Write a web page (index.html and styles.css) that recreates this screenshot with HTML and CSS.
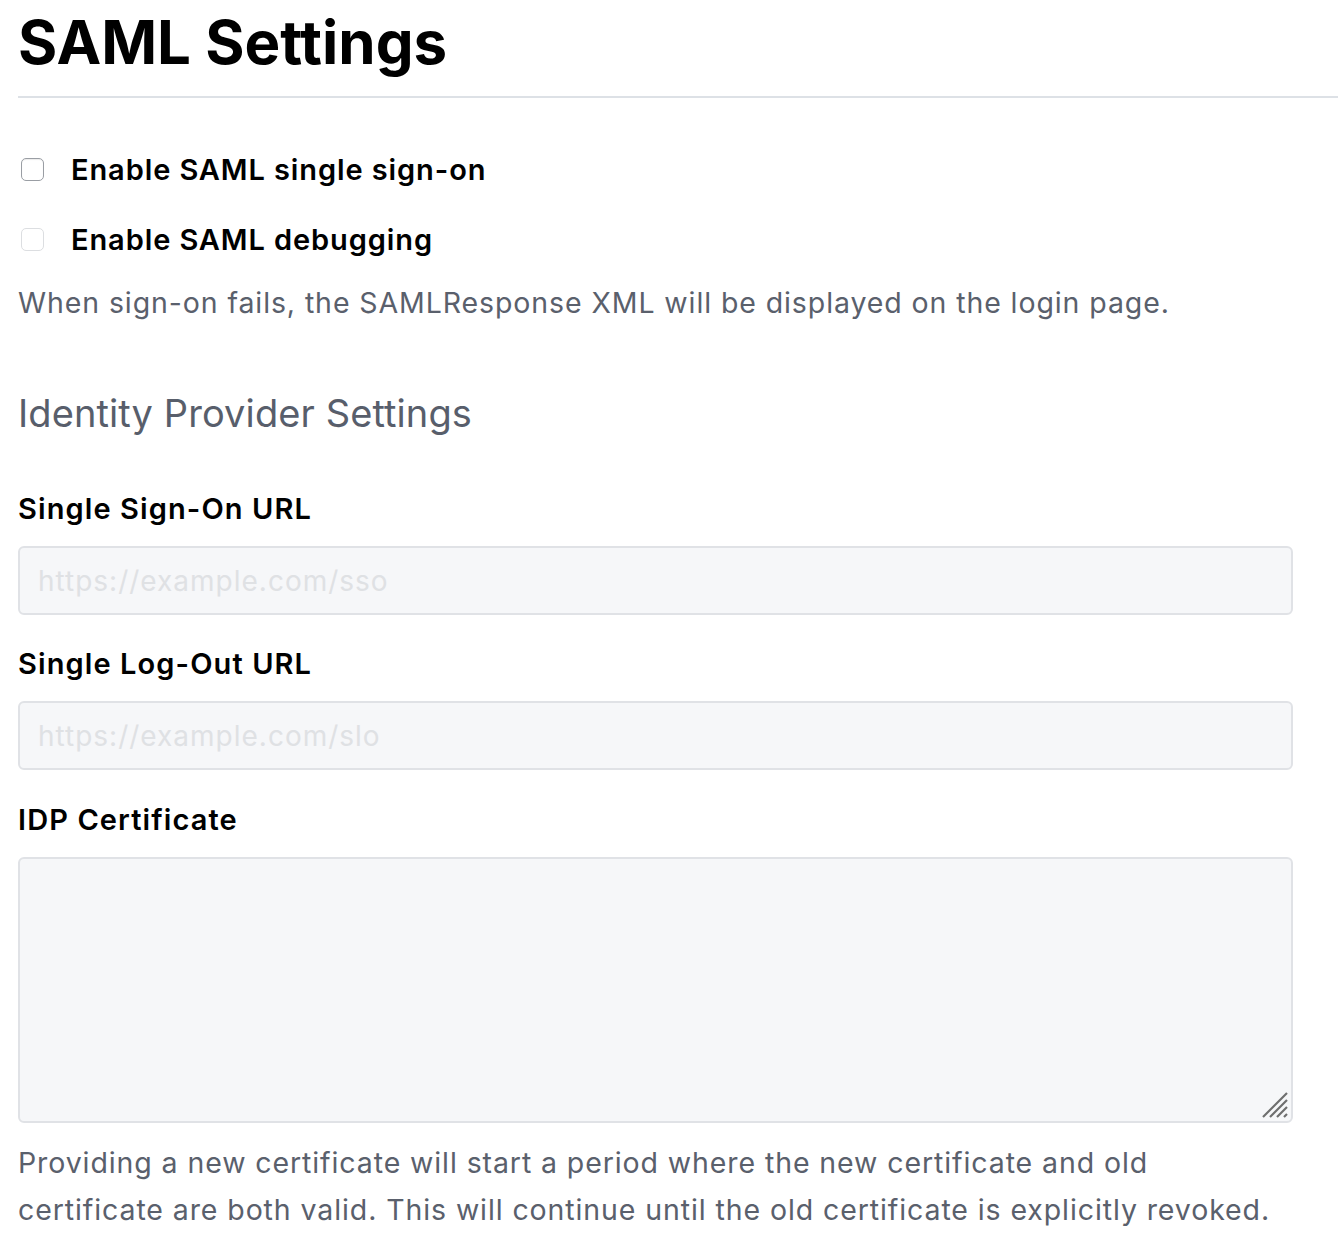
FILE: index.html
```html
<!DOCTYPE html>
<html>
<head>
<meta charset="utf-8">
<link rel="stylesheet" href="styles.css">
</head>
<body>
<div class="page">
  <h1 class="title">SAML Settings</h1>
  <hr class="divider">
  <label class="check">
    <span class="box"></span>
    <span class="check-text">Enable SAML single sign-on</span>
  </label>
  <label class="check">
    <span class="box box-disabled"></span>
    <span class="check-text">Enable SAML debugging</span>
  </label>
  <p class="help help-first">When sign-on fails, the SAMLResponse XML will be displayed on the login page.</p>
  <h2 class="section">Identity Provider Settings</h2>
  <div class="field">
    <div class="label">Single Sign-On URL</div>
    <input class="input" type="text" placeholder="https://example.com/sso">
  </div>
  <div class="field">
    <div class="label">Single Log-Out URL</div>
    <input class="input" type="text" placeholder="https://example.com/slo">
  </div>
  <div class="field">
    <div class="label">IDP Certificate</div>
    <div class="textarea-wrap">
      <textarea class="textarea"></textarea>
      <svg class="grip" width="28" height="28" viewBox="0 0 28 28">
        <path d="M2 26 L26 2 M9 26 L26 9 M16 26 L26 16 M23 26 L26 23" stroke="#6f6f6f" stroke-width="2.2" stroke-linecap="butt" fill="none"/>
      </svg>
    </div>
  </div>
  <p class="help help-last">Providing a new certificate will start a period where the new certificate and old certificate are both valid. This will continue until the old certificate is explicitly revoked.</p>
</div>
</body>
</html>
```
FILE: styles.css
```css
html, body {
  margin: 0;
  padding: 0;
  background: #ffffff;
}
body {
  font-family: Inter, "Noto Sans", "Liberation Sans", sans-serif;
  color: #000;
}
.page {
  padding: 0 0 0 18px;
}
.title {
  margin: 0;
  padding-top: 6px;
  font-size: 60px;
  font-weight: 700;
  line-height: 72px;
  letter-spacing: 0;
}
.divider {
  border: 0;
  height: 2px;
  background: #dde1e6;
  margin: 18px 0 0 0;
}
.check {
  display: flex;
  align-items: center;
  gap: 27px;
  height: 40px;
  margin-top: 0;
}
.check:first-of-type {
  margin-top: 51px;
}
.check + .check {
  margin-top: 30px;
}
.box {
  width: 21px;
  height: 21px;
  margin-left: 3px;
  border: 1.5px solid #9a9ea4;
  border-radius: 5px;
  background: #fff;
  box-shadow: inset 0 1px 1px rgba(0,0,0,0.08);
}
.box-disabled {
  border-color: #dcdee1;
  box-shadow: none;
}
.check-text {
  font-size: 29px;
  font-weight: 600;
  letter-spacing: 0.9px;
}
.help {
  margin: 0;
  font-size: 28.5px;
  line-height: 47px;
  color: #5a606c;
  letter-spacing: 0.9px;
  width: 1275px;
}
.help-first {
  margin-top: 20px;
}
.section {
  margin: 62px 0 0 0;
  font-size: 38px;
  font-weight: 400;
  line-height: 50px;
  color: #585e6b;
  letter-spacing: 0.1px;
}
.field {
  display: flex;
  flex-direction: column;
}
.field:first-of-type {
  margin-top: 51px;
}
.field + .field {
  margin-top: 29px;
}
.field + .field + .field {
  margin-top: 30px;
}
.label {
  font-size: 29px;
  font-weight: 600;
  line-height: 40px;
  margin-bottom: 17px;
  letter-spacing: 1.1px;
}
.input, .textarea {
  width: 1275px;
  box-sizing: border-box;
  border: 2px solid #e0e2e6;
  border-radius: 6px;
  background: #f6f7f9;
  font-family: Inter, "Noto Sans", "Liberation Sans", sans-serif;
  font-size: 28px;
  letter-spacing: 1px;
  padding: 0 18px;
  outline: none;
}
.input {
  height: 69px;
}
.input::placeholder {
  color: #dfe1e4;
}
.textarea-wrap {
  position: relative;
  width: 1275px;
}
.textarea {
  height: 266px;
  resize: none;
  display: block;
}
.grip {
  position: absolute;
  right: 4px;
  bottom: 4px;
}
.help-last {
  margin-top: 16px;
}
```
